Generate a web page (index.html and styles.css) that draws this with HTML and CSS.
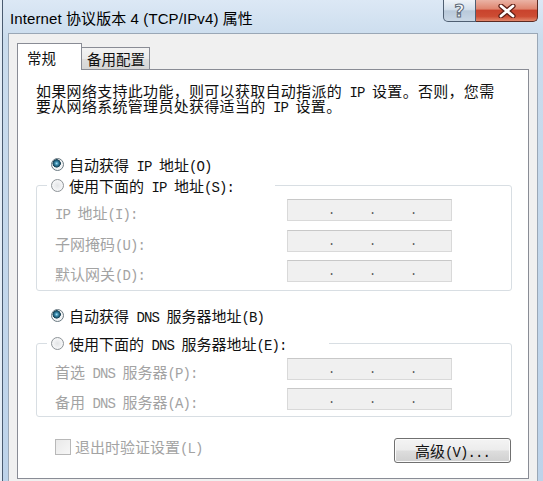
FILE: index.html
```html
<!DOCTYPE html>
<html lang="zh-CN">
<head>
<meta charset="utf-8">
<title>Internet 协议版本 4 (TCP/IPv4) 属性</title>
<link rel="stylesheet" href="styles.css">
</head>
<body>
<div class="window">
  <div class="titlebar">
    <div class="title">Internet 协议版本 4 (TCP/IPv4) 属性</div>
    <div class="caption-btns">
      <div class="cap help">?</div>
      <div class="cap close">
        <svg width="20" height="14" viewBox="0 0 20 14"><path d="M4 2 L16 12 M16 2 L4 12" stroke="#5e1f16" stroke-width="5.2" stroke-linecap="round" fill="none"/><path d="M4 2 L16 12 M16 2 L4 12" stroke="#ffffff" stroke-width="2.8" stroke-linecap="round" fill="none"/></svg>
      </div>
    </div>
  </div>
  <div class="client">
    <div class="tabs">
      <div class="tab active">常规</div>
      <div class="tab">备用配置</div>
    </div>
    <div class="page">
      <p class="intro">如果网络支持此功能，则可以获取自动指派的<span class="en"> IP </span>设置。否则，您需<br>要从网络系统管理员处获得适当的<span class="en"> IP </span>设置。</p>

      <div class="radio-row r1"><span class="radio checked"></span><span class="txt">自动获得<span class="en"> IP </span>地址<span class="en">(O)</span></span></div>
      <fieldset class="group g1">
        <legend class="leg1"><span class="radio"></span><span class="txt">使用下面的<span class="en"> IP </span>地址<span class="en">(S):</span></span></legend>
        <div class="rows">
          <div class="row"><span class="lbl"><span class="en">IP </span>地址<span class="en">(I):</span></span><span class="ip"><span>.</span><span>.</span><span>.</span></span></div>
          <div class="row"><span class="lbl">子网掩码<span class="en">(U):</span></span><span class="ip"><span>.</span><span>.</span><span>.</span></span></div>
          <div class="row"><span class="lbl">默认网关<span class="en">(D):</span></span><span class="ip"><span>.</span><span>.</span><span>.</span></span></div>
        </div>
      </fieldset>

      <div class="radio-row r3"><span class="radio checked"></span><span class="txt">自动获得<span class="en"> DNS </span>服务器地址<span class="en">(B)</span></span></div>
      <fieldset class="group g2">
        <legend class="leg2"><span class="radio"></span><span class="txt">使用下面的<span class="en"> DNS </span>服务器地址<span class="en">(E):</span></span></legend>
        <div class="rows">
          <div class="row"><span class="lbl">首选<span class="en"> DNS </span>服务器<span class="en">(P):</span></span><span class="ip"><span>.</span><span>.</span><span>.</span></span></div>
          <div class="row"><span class="lbl">备用<span class="en"> DNS </span>服务器<span class="en">(A):</span></span><span class="ip"><span>.</span><span>.</span><span>.</span></span></div>
        </div>
      </fieldset>

      <div class="footer">
        <div class="check"><span class="box"></span><span class="check-lbl">退出时验证设置<span class="en">(L)</span></span></div>
        <div class="btn"><span class="txt">高级<span class="en">(V)...</span></span></div>
      </div>
    </div>
  </div>
</div>
</body>
</html>
```
FILE: styles.css
```css
html, body {
  margin: 0;
  padding: 0;
}
body {
  width: 543px;
  height: 481px;
  overflow: hidden;
}
.window {
  width: 543px;
  height: 481px;
  background:
    linear-gradient(to right, #e4edf6 0 2px, #4a5b70 2px 3px, transparent 3px),
    linear-gradient(to bottom, #dce8f5 0, #cadced 40px, #bdd3ea 100%);
  display: flex;
  flex-direction: column;
}
.titlebar {
  height: 33px;
  display: flex;
  align-items: flex-start;
}
.title {
  padding: 9px 0 0 10px;
  line-height: 20px;
  font-family: "Liberation Sans", "Noto Sans CJK SC", sans-serif;
  font-size: 15px;
  color: #000;
  letter-spacing: 0.1px;
}
.caption-btns {
  margin-left: auto;
  margin-right: 5px;
  display: flex;
}
.cap {
  height: 22px;
  box-sizing: border-box;
  border: 1px solid #4f5f72;
  border-top: none;
  display: flex;
  align-items: center;
  justify-content: center;
}
.help {
  width: 33px;
  border-radius: 0 0 0 5px;
  background: linear-gradient(to bottom, #eef3f8 0%, #d3dfeb 45%, #b9c9da 52%, #c9d7e5 100%);
  font-family: "DejaVu Sans", sans-serif;
  font-weight: bold;
  font-size: 18px;
  line-height: 20px;
  color: #f6f8fa;
  -webkit-text-stroke: 1px #5d6a78;
}
.close {
  width: 62px;
  border-left: none;
  border-radius: 0 0 5px 0;
  background: linear-gradient(to bottom, #eab3a5 0%, #df8670 42%, #c9432d 50%, #cd4c33 78%, #e2876b 100%);
  border-color: #5b2a22;
}
.client {
  margin-left: 8px;
  width: 530px;
  height: 448px;
  box-sizing: border-box;
  border: 1px solid #9aa7b6;
  border-bottom: none;
  background: #f0f0f0;
  padding: 9px 0 0 8px;
  font-family: "Noto Sans CJK SC", sans-serif;
  font-size: 15px;
  color: #111;
}
.en {
  font-family: "Liberation Mono", monospace;
  font-size: 14px;
  letter-spacing: -0.9px;
  line-height: 0;
}
.txt {
  line-height: 15px;
  white-space: pre;
}
.tabs {
  display: flex;
  align-items: flex-end;
  height: 26px;
  font-size: 14.5px;
}
.tab {
  box-sizing: border-box;
  border: 1px solid #898c95;
  border-bottom: none;
  display: flex;
  align-items: center;
}
.tab.active {
  width: 65px;
  height: 27px;
  margin-bottom: -1px;
  background: #fff;
  padding-left: 9px;
  position: relative;
  z-index: 1;
}
.tab:not(.active) {
  width: 69px;
  height: 22px;
  margin-left: -1px;
  padding-left: 5px;
  background: linear-gradient(to bottom, #f3f3f3 0%, #ebebeb 50%, #dedede 51%, #d6d6d6 100%);
}
.page {
  width: 512px;
  height: 410px;
  box-sizing: border-box;
  border: 1px solid #898c95;
  background: #fff;
}
.intro {
  margin: 13px 0 0 18px;
  line-height: 15px;
  letter-spacing: 0.3px;
}
.radio-row {
  height: 21px;
  display: flex;
  align-items: center;
  padding-left: 33px;
}
.r1 { margin-top: 41px; }
.r3 { margin-top: 14px; }
.radio {
  width: 13px;
  height: 13px;
  box-sizing: border-box;
  border-radius: 50%;
  border: 1px solid #8e9498;
  background: radial-gradient(circle at 50% 50%, #e2e4e6 0, #f4f5f6 60%, #e6e8ea 100%);
  margin-right: 5px;
  flex: none;
}
.radio.checked {
  background:
    radial-gradient(circle at 42% 40%, #a8e2f5 0, #3d8eb0 1.6px, #1f5a73 3px, #163f52 3.9px, transparent 4.4px),
    radial-gradient(circle at 50% 50%, #e2e4e6 0, #f4f5f6 60%, #e6e8ea 100%);
  border-color: #6b7a82;
}
.group {
  margin: 0 16px 0 18px;
  padding: 0 10px 8px 10px;
  border: 1px solid #d8dee3;
  border-radius: 3px;
  min-width: 0;
}
.group legend {
  box-sizing: border-box;
  height: 21px;
  padding: 0 4px;
  display: flex;
  align-items: center;
}
.leg1 { width: 228px; }
.leg2 { width: 282px; }
.g2 { margin-top: 7px; padding-bottom: 6px; }
.rows {
  margin-top: 3px;
  display: flex;
  flex-direction: column;
  gap: 8.5px;
}
.g2 .rows { margin-top: 3.5px; }
.row {
  height: 22px;
  display: flex;
  align-items: center;
  padding-left: 8px;
}
.lbl {
  width: 232px;
  padding-top: 5px;
  line-height: 15px;
  color: #a3a3a3;
  flex: none;
  white-space: pre;
}
.ip {
  width: 165px;
  height: 22px;
  box-sizing: border-box;
  border: 1px solid #d9d9d9;
  border-top-color: #c8c8c8;
  background: #f0f0f0;
  display: flex;
  padding-left: 40px;
  line-height: 22px;
  color: #555;
  letter-spacing: 0;
  font-family: "Liberation Mono", monospace;
  font-size: 12px;
}
.ip span {
  width: 41px;
  flex: none;
}
.footer {
  margin-top: 21px;
  height: 25px;
  display: flex;
  align-items: flex-start;
  justify-content: space-between;
  padding: 0 17px 0 37px;
}
.check {
  margin-top: 1px;
  display: flex;
  align-items: center;
}
.box {
  width: 16px;
  height: 16px;
  box-sizing: border-box;
  border: 1px solid #b8b8b8;
  background: linear-gradient(135deg, #e9e9e9, #f7f7f7);
  margin-right: 4px;
}
.check-lbl {
  color: #a3a3a3;
  line-height: 16px;
  white-space: pre;
}
.btn {
  width: 117px;
  height: 25px;
  box-sizing: border-box;
  border: 1px solid #707070;
  border-radius: 3px;
  background: linear-gradient(to bottom, #f4f4f4 0%, #ececec 48%, #dddddd 52%, #d0d0d0 100%);
  box-shadow: inset 0 0 0 1px #fbfbfb;
  display: flex;
  align-items: center;
  justify-content: center;
}
```
